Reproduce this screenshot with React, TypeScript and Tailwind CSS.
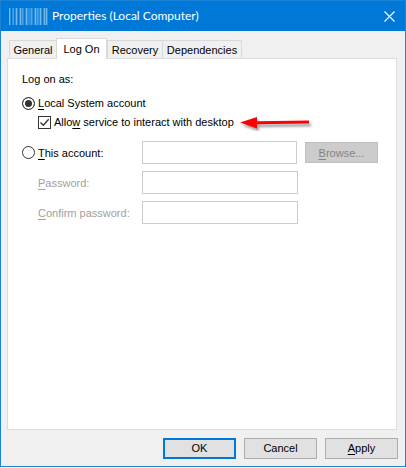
import { useState } from "react";

const tabs = ["General", "Log On", "Recovery", "Dependencies"];

const tabWidths: Record<string, string> = {
  General: "w-12",
  "Log On": "w-[51px]",
  Recovery: "w-14",
  Dependencies: "w-20",
};

const radioClass =
  "size-[13px] shrink-0 appearance-none rounded-full border border-[#333333] bg-white checked:bg-[#333333] checked:shadow-[inset_0_0_0_2px_white]";
const fieldClass = "h-[23px] min-w-0 border border-[#cccccc] bg-white px-1 outline-none";
const buttonClass = "w-[73px] shrink-0 bg-[#e1e1e1]";

function MaskedName() {
  return (
    <svg width="39" height="17" viewBox="0 0 39 17" shapeRendering="crispEdges" aria-hidden="true">
      <rect width="39" height="17" fill="#2b8fdf" />
      <path
        d="M.5 0v17M7.5 0v17M11.5 0v17M17.5 0v17M26.5 0v17M31.5 0v17M35.5 0v17M37.5 0v17"
        stroke="#72b9ec"
      />
      <path d="M2.5 0v17M5.5 0v17M9.5 0v17M15.5 0v17M24.5 0v17M33.5 0v17" stroke="#0078d7" />
      <path d="M4.5 0v17M13.5 0v17M22.5 0v17M28.5 0v17" stroke="#4da3e5" />
    </svg>
  );
}

function TitleBar() {
  return (
    <header className="flex h-[30px] items-center bg-[#0078d7] pr-1.5 pl-2 text-white">
      <MaskedName />
      <h1 className="ml-1 grow font-[Lato,sans-serif] text-[12px] leading-4">
        Properties (Local Computer)
      </h1>
      <button type="button" aria-label="Close" className="p-1">
        <svg width="11" height="11" viewBox="0 0 11 11" stroke="white" strokeWidth="1.1" aria-hidden="true">
          <path d="M.5 .5l10 10M10.5 .5l-10 10" />
        </svg>
      </button>
    </header>
  );
}

function Arrow() {
  return (
    <svg width="74" height="18" viewBox="0 0 74 18" className="shrink-0" aria-hidden="true">
      <path
        d="M0 9.500L17 4v4.200L69 7.600v2.800L17 11.200v4.200z"
        fill="red"
        className="drop-shadow-[2px_3px_1px_rgba(0,0,0,0.35)]"
      />
    </svg>
  );
}

export default function App() {
  const [active, setActive] = useState("Log On");
  const [account, setAccount] = useState("local");
  const [interact, setInteract] = useState(true);

  return (
    <div className="flex min-h-screen flex-col bg-white font-['Liberation_Sans',sans-serif] text-[11px] leading-4 text-black">
      <main className="mb-px flex grow flex-col border border-[#1883d7] bg-[#f0f0f0]">
        <TitleBar />

        <div role="tablist" className="mt-[7px] flex items-end pl-2">
          {tabs.map((tab) => (
            <button
              key={tab}
              type="button"
              role="tab"
              aria-selected={tab === active}
              onClick={() => setActive(tab)}
              className={`${tabWidths[tab]} border border-b-0 border-[#d9d9d9] whitespace-nowrap ${
                tab === active ? "relative -mb-px h-[21px] bg-white pb-px" : "-mr-px h-[18px] bg-[#f0f0f0]"
              }`}
            >
              {tab}
            </button>
          ))}
        </div>

        <section role="tabpanel" className="mr-2 ml-1.5 flex grow flex-col border border-[#dcdcdc] bg-white px-3.5 pt-3">
          <p>Log on as:</p>

          <label className="mt-2 flex items-center gap-[3px]">
            <input
              type="radio"
              name="account"
              className={radioClass}
              checked={account === "local"}
              onChange={() => setAccount("local")}
            />
            <span>
              <u className="underline-offset-2">L</u>ocal System account
            </span>
          </label>

          <div className="mt-0.5 flex h-[18px] items-center pl-4">
            <label className="flex items-center gap-[3px] whitespace-nowrap">
              <span className="grid">
                <input
                  type="checkbox"
                  className="peer col-start-1 row-start-1 size-[13px] appearance-none border border-[#333333] bg-white"
                  checked={interact}
                  onChange={(e) => setInteract(e.target.checked)}
                />
                <svg
                  viewBox="0 0 13 13"
                  fill="none"
                  stroke="#333333"
                  strokeWidth="1.3"
                  className="pointer-events-none invisible col-start-1 row-start-1 size-[13px] peer-checked:visible"
                  aria-hidden="true"
                >
                  <path d="M2.500 6.500l2.800 2.800 5.400-6" />
                </svg>
              </span>
              <span>
                Allo<u className="underline-offset-2">w</u> service to interact with desktop
              </span>
            </label>
            <span className="ml-1.5">
              <Arrow />
            </span>
          </div>

          <div className="mt-2.5 grid grid-cols-[120px_minmax(0,156px)_80px] items-center gap-y-[7px]">
            <label className="flex items-center gap-[3px]">
              <input
                type="radio"
                name="account"
                className={radioClass}
                checked={account === "other"}
                onChange={() => setAccount("other")}
              />
              <span>
                <u className="underline-offset-2">T</u>his account:
              </span>
            </label>
            <input aria-label="Account name" disabled={account === "local"} className={`${fieldClass} mr-px`} />
            <button
              type="button"
              disabled={account === "local"}
              className="ml-[7px] h-[21px] w-[73px] border border-[#bfbfbf] bg-[#cccccc] text-[#838383]"
            >
              <u className="underline-offset-2">B</u>rowse...
            </button>

            <label htmlFor="password" className="pl-4 text-[#a0a0a0]">
              <u className="underline-offset-2">P</u>assword:
            </label>
            <input id="password" type="password" disabled={account === "local"} className={`${fieldClass} col-end-3`} />

            <label htmlFor="confirm" className="col-start-1 pl-4 text-[#a0a0a0]">
              <u className="underline-offset-2">C</u>onfirm password:
            </label>
            <input id="confirm" type="password" disabled={account === "local"} className={`${fieldClass} col-end-3`} />
          </div>
        </section>

        <footer className="flex h-9 items-center justify-end gap-2 pr-[7px]">
          <button type="button" className={`${buttonClass} h-[21px] border-2 border-[#0078d7]`}>
            OK
          </button>
          <button type="button" className={`${buttonClass} h-[21px] border border-[#adadad]`}>
            Cancel
          </button>
          <button type="button" className={`${buttonClass} h-[21px] border border-[#adadad]`}>
            <u className="underline-offset-2">A</u>pply
          </button>
        </footer>
      </main>
    </div>
  );
}
